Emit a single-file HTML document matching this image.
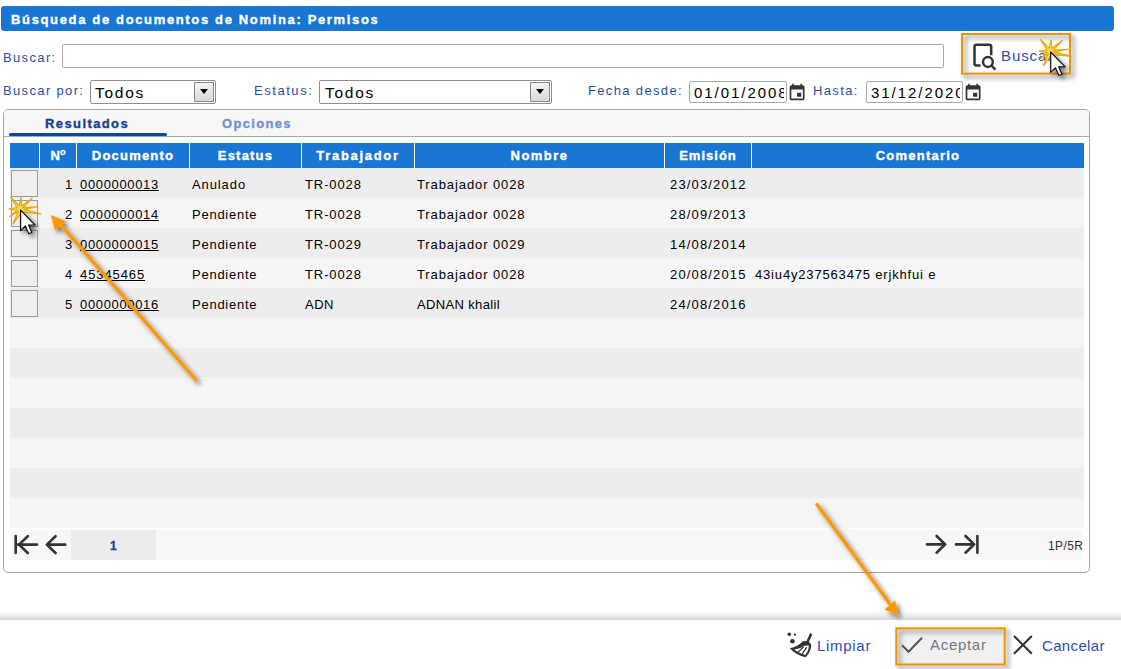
<!DOCTYPE html>
<html><head><meta charset="utf-8">
<style>
*{box-sizing:border-box;margin:0;padding:0}
html,body{width:1121px;height:669px;overflow:hidden;background:#fff;font-family:"Liberation Sans",sans-serif;position:relative}
.a{position:absolute;white-space:pre;line-height:1}
.hdr{left:1px;top:6px;width:1113px;height:25px;background:#1976d2;border-radius:3px}
.lbl{color:#1f4ea6;font-size:13px;letter-spacing:1.35px}
.inp{position:absolute;background:#fff;border:1px solid #a9a9a9;border-radius:2px}
.sel{position:absolute;background:#fff;border:1px solid #8f8f8f;border-radius:2px}
.selbtn{position:absolute;top:1px;right:1px;bottom:1px;width:20px;border:1px solid #8a8a8a;background:linear-gradient(#f4f4f4,#d8d8d8)}
.selbtn:after{content:"";position:absolute;left:4.5px;top:6px;border-left:4.5px solid transparent;border-right:4.5px solid transparent;border-top:5.5px solid #000}
.txt15{font-size:15px;color:#000;letter-spacing:2px}
.todos{font-size:15.5px;color:#000;letter-spacing:1.75px}
.panel{left:3px;top:109px;width:1087px;height:464px;border:1px solid #a6a6a6;border-radius:5px;background:#fff}
.tabbar{left:4px;top:110px;width:1085px;height:27px;background:#f7f7f7;border-bottom:1px solid #ababab;border-radius:4px 4px 0 0}
.th{-webkit-text-stroke:0.35px #fff;position:absolute;top:143px;height:25px;background:#1976d2;color:#fff;font-weight:bold;font-size:13px;letter-spacing:1.2px;text-align:center;line-height:25px;white-space:pre}
.row{position:absolute;left:10px;width:1074px;height:30px}
.td{position:absolute;font-size:13px;letter-spacing:0.9px;color:#000;line-height:1;white-space:pre}
.cb{position:absolute;left:11px;width:27px;height:27px;border:1px solid #9a9a9a;background:#efefef}
u{text-decoration:underline}
.fbtn{font-size:15px;color:#1f4fb0;letter-spacing:0.7px}
</style></head><body>

<div class="a hdr"></div>
<div class="a" style="left:11px;top:13px;font-size:13px;font-weight:bold;color:#fff;-webkit-text-stroke:0.35px #fff;letter-spacing:1.65px">Búsqueda de documentos de Nomina: Permisos</div>

<div class="a lbl" style="left:3px;top:51px">Buscar:</div>
<div class="inp" style="left:62px;top:44px;width:882px;height:24px"></div>

<!-- Buscar button -->
<div class="a fbtn" style="left:1001px;top:48px;letter-spacing:0.9px">Buscar</div>

<div class="a lbl" style="left:3px;top:84px">Buscar por:</div>
<div class="sel" style="left:90px;top:80px;width:126px;height:24px"><div class="selbtn"></div></div>
<div class="a todos" style="left:95px;top:85px">Todos</div>

<div class="a lbl" style="left:254px;top:84px;letter-spacing:1.55px">Estatus:</div>
<div class="sel" style="left:319px;top:80px;width:233px;height:24px"><div class="selbtn"></div></div>
<div class="a todos" style="left:325px;top:85px">Todos</div>

<div class="a lbl" style="left:588px;top:84px">Fecha desde:</div>
<div class="inp" style="left:689px;top:81px;width:98px;height:22px"><div class="a" style="left:0;top:0;width:94px;height:20px;overflow:hidden"><div class="a txt15" style="left:4px;top:3px;letter-spacing:1.95px">01/01/2008</div></div></div>

<div class="a lbl" style="left:813px;top:84px">Hasta:</div>
<div class="inp" style="left:866px;top:81px;width:97px;height:22px"><div class="a" style="left:0;top:0;width:93px;height:20px;overflow:hidden"><div class="a txt15" style="left:4px;top:3px;letter-spacing:1.95px">31/12/2020</div></div></div>

<!-- panel -->
<div class="a panel"></div>
<div class="a tabbar"></div>
<div class="a" style="left:45px;top:117px;font-size:13px;font-weight:bold;color:#173f8f;-webkit-text-stroke:0.35px #173f8f;letter-spacing:1.4px">Resultados</div>
<div class="a" style="left:9px;top:133px;width:158px;height:3px;background:#0d47a1;border-radius:2px"></div>
<div class="a" style="left:222px;top:117px;font-size:13px;font-weight:bold;color:#7391cd;-webkit-text-stroke:0.35px #7391cd;letter-spacing:1.33px">Opciones</div>

<!-- table header -->
<div class="th" style="left:10px;width:29px"></div>
<div class="th" style="left:40px;width:36px;letter-spacing:0"></div><div class="a" style="left:50.5px;top:149px;font-size:13px;font-weight:bold;color:#fff;-webkit-text-stroke:0.35px #fff">N</div><div class="a" style="left:60px;top:148px;font-size:9px;font-weight:bold;color:#fff;-webkit-text-stroke:0.3px #fff">o</div>
<div class="th" style="left:77px;width:112px">Documento</div>
<div class="th" style="left:190px;width:111px">Estatus</div>
<div class="th" style="left:302px;width:112px;letter-spacing:1.7px">Trabajador</div>
<div class="th" style="left:415px;width:249px;letter-spacing:1.44px">Nombre</div>
<div class="th" style="left:665px;width:86px;letter-spacing:1px">Emisión</div>
<div class="th" style="left:752px;width:332px;letter-spacing:1.23px">Comentario</div>

<!-- rows -->
<div class="row" style="top:168px;background:#ededed"></div>
<div class="row" style="top:198px;background:#f5f5f5"></div>
<div class="row" style="top:228px;background:#ededed"></div>
<div class="row" style="top:258px;background:#f5f5f5"></div>
<div class="row" style="top:288px;background:#ededed"></div>
<div class="row" style="top:318px;background:#f5f5f5"></div>
<div class="row" style="top:348px;background:#ededed"></div>
<div class="row" style="top:378px;background:#f5f5f5"></div>
<div class="row" style="top:408px;background:#ededed"></div>
<div class="row" style="top:438px;background:#f5f5f5"></div>
<div class="row" style="top:468px;background:#ededed"></div>
<div class="row" style="top:498px;background:#f5f5f5"></div>

<div class="cb" style="top:170px"></div>
<div class="cb" style="top:200px"></div>
<div class="cb" style="top:230px"></div>
<div class="cb" style="top:260px"></div>
<div class="cb" style="top:290px"></div>

<div class="td" style="left:65px;top:178px">1</div>
<div class="td" style="left:80px;top:178px"><u style="letter-spacing:0.65px">0000000013</u></div>
<div class="td" style="left:192px;top:178px">Anulado</div>
<div class="td" style="left:305px;top:178px">TR-0028</div>
<div class="td" style="left:417px;top:178px">Trabajador 0028</div>
<div class="td" style="left:670px;top:178px;letter-spacing:1.15px">23/03/2012</div>

<div class="td" style="left:65px;top:208px">2</div>
<div class="td" style="left:80px;top:208px"><u style="letter-spacing:0.65px">0000000014</u></div>
<div class="td" style="left:192px;top:208px;letter-spacing:0.75px">Pendiente</div>
<div class="td" style="left:305px;top:208px">TR-0028</div>
<div class="td" style="left:417px;top:208px">Trabajador 0028</div>
<div class="td" style="left:670px;top:208px;letter-spacing:1.15px">28/09/2013</div>

<div class="td" style="left:65px;top:238px">3</div>
<div class="td" style="left:80px;top:238px"><u style="letter-spacing:0.65px">0000000015</u></div>
<div class="td" style="left:192px;top:238px;letter-spacing:0.75px">Pendiente</div>
<div class="td" style="left:305px;top:238px">TR-0029</div>
<div class="td" style="left:417px;top:238px">Trabajador 0029</div>
<div class="td" style="left:670px;top:238px;letter-spacing:1.15px">14/08/2014</div>

<div class="td" style="left:65px;top:268px">4</div>
<div class="td" style="left:80px;top:268px"><u>45345465</u></div>
<div class="td" style="left:192px;top:268px;letter-spacing:0.75px">Pendiente</div>
<div class="td" style="left:305px;top:268px">TR-0028</div>
<div class="td" style="left:417px;top:268px">Trabajador 0028</div>
<div class="td" style="left:670px;top:268px;letter-spacing:1.15px">20/08/2015</div>
<div class="td" style="left:755px;top:268px;letter-spacing:0.83px">43iu4y237563475 erjkhfui e</div>

<div class="td" style="left:65px;top:298px">5</div>
<div class="td" style="left:80px;top:298px"><u style="letter-spacing:0.65px">0000000016</u></div>
<div class="td" style="left:192px;top:298px;letter-spacing:0.75px">Pendiente</div>
<div class="td" style="left:305px;top:298px;letter-spacing:0.5px">ADN</div>
<div class="td" style="left:417px;top:298px;letter-spacing:0.35px">ADNAN khalil</div>
<div class="td" style="left:670px;top:298px;letter-spacing:1.15px">24/08/2016</div>

<!-- pagination -->
<div class="a" style="left:11px;top:530px;width:1071px;height:30px;background:#f7f7f7"></div>
<div class="a" style="left:71px;top:530px;width:85px;height:30px;background:#ececec"></div>
<div class="a" style="left:110px;top:540px;font-size:12px;font-weight:bold;color:#1b3f9a;-webkit-text-stroke:0.3px #1b3f9a">1</div>
<div class="a" style="left:1048px;top:540px;font-size:12px;color:#333;letter-spacing:0.4px">1P/5R</div>

<!-- footer -->
<div class="a" style="left:0;top:610px;width:1121px;height:10px;background:linear-gradient(rgba(0,0,0,0),rgba(0,0,0,.05) 45%,rgba(0,0,0,.17))"></div>
<div class="a fbtn" style="left:817px;top:638px">Limpiar</div>
<div class="a" style="left:897px;top:629px;width:107px;height:35px;background:#f1f1f1"></div>
<div class="a" style="left:930px;top:637px;font-size:15px;color:#777;letter-spacing:0.7px">Aceptar</div>
<div class="a fbtn" style="left:1042px;top:638px;letter-spacing:0.35px">Cancelar</div>

<svg class="a" style="left:0;top:0" width="1121" height="669" viewBox="0 0 1121 669">
<defs>
<filter id="sh" x="-30%" y="-30%" width="160%" height="160%"><feGaussianBlur in="SourceAlpha" stdDeviation="2.4"/><feOffset dx="2.5" dy="3"/><feComponentTransfer><feFuncA type="linear" slope="0.55"/></feComponentTransfer><feMerge><feMergeNode/><feMergeNode in="SourceGraphic"/></feMerge></filter>
<g id="star"><path d="M-10.0 -12.3L-1.0 -3.2L0.8 -11.7L1.5 -3.1L12.3 -11.1L3.1 -1.4L18.4 -2.2L3.4 0.2L21.2 5.0L1.5 3.1L-7.2 15.1L-2.2 2.6L-10.6 7.8L-3.2 1.1L-11.7 0.0L-3.1 -1.5Z" fill="#f4dc55" stroke="#eaa500" stroke-width="1.1" stroke-linejoin="miter"/></g>
<g id="cur"><path d="M0 0V20.4L4.8 15.8L8.2 23.5L11.2 22.2L7.9 14.8H14.4Z" fill="#fff" stroke="#111" stroke-width="1.2" stroke-linejoin="round"/></g>
</defs>
<!-- orange boxes -->
<rect x="962" y="34" width="108" height="39.6" fill="none" stroke="#f39200" stroke-width="2" filter="url(#sh)"/>
<rect x="896.3" y="628.3" width="108.4" height="36.2" fill="none" stroke="#f39200" stroke-width="2" filter="url(#sh)"/>
<!-- calendar icons -->
<g fill="#333">
<path transform="translate(963.2,82.8) scale(0.825)" d="M17 12h-5v5h5v-5zM16 1v2H8V1H6v2H5c-1.11 0-1.99.9-1.99 2L3 19c0 1.1.89 2 2 2h14c1.1 0 2-.9 2-2V5c0-1.1-.9-2-2-2h-1V1h-2zm3 18H5V8h14v11z"/>
<path transform="translate(787.2,82.8) scale(0.825)" d="M17 12h-5v5h5v-5zM16 1v2H8V1H6v2H5c-1.11 0-1.99.9-1.99 2L3 19c0 1.1.89 2 2 2h14c1.1 0 2-.9 2-2V5c0-1.1-.9-2-2-2h-1V1h-2zm3 18H5V8h14v11z"/>
</g>
<!-- search icon -->
<g fill="none" stroke="#333" stroke-width="2.5" stroke-linejoin="round">
<path d="M980.6 65.6H976.5a2 2 0 0 1-2-2V46.8a2 2 0 0 1 2-2H989.2a2 2 0 0 1 2 2V55.2"/>
<circle cx="987.9" cy="62" r="4.9"/>
<path d="M991.4 65.5L995.4 69.6"/>
</g>
<!-- pagination arrows -->
<g fill="none" stroke="#333" stroke-width="2.6" stroke-linecap="round" stroke-linejoin="round">
<path d="M15.7 536V553M37 544.6H18M27.8 536.2L19 544.6L27.8 553"/>
<path d="M65.3 544.6H47M55.6 536.2L46.8 544.6L55.6 553"/>
<path d="M927 544.4H945M936.6 536L945.2 544.4L936.6 552.7"/>
<path d="M956 544.4H974M965.5 536L974.2 544.4L965.5 552.7M977.4 536V552.7"/>
</g>
<!-- check / X -->
<path d="M902 645.2L908.6 651.8L922 637.8" fill="none" stroke="#555" stroke-width="2"/>
<path d="M1014 636L1031.8 653.8M1031.8 636L1014 653.8" fill="none" stroke="#333" stroke-width="2.2"/>
<!-- broom -->
<g fill="#333">
<circle cx="789.3" cy="634.2" r="1.8"/><circle cx="795" cy="634.7" r="1.1"/><circle cx="792.4" cy="641.2" r="2.3"/>
<path d="M810.2 633L812.4 634.3L808.6 642.6L806.2 641.4Z"/>
<path d="M802.8 641.3C799.5 645 795 647.5 789.8 648.2C794 652.8 799.5 655.8 805.8 657.2C809.2 653.5 811.5 649 811.2 644.3L807.8 641Z"/>
</g>
<path d="M794.2 649.6C798 649 801.5 647.8 804.5 645.8L808.8 645.6C809 649 807.6 652.3 805.3 654.9C801.2 654 797.5 652.2 794.2 649.6Z" fill="#fff"/>
<path d="M797.6 652.6L803.6 646.8M801.8 654.6L806.8 647.2" stroke="#333" stroke-width="1.3" fill="none"/>
<!-- orange arrows -->
<g filter="url(#sh)">
<path d="M196 380L61 225" stroke="#ff9800" stroke-width="3.4" stroke-linecap="round"/>
<path d="M50.8 215L65.8 221.3L55 230.6Z" fill="#ff9800"/>
<path d="M817 504.5L890 604" stroke="#ff9800" stroke-width="3.4" stroke-linecap="round"/>
<path d="M898.4 615.6L884.4 609.4L895.3 600.6Z" fill="#ff9800"/>
</g>
<!-- stars + cursors -->
<use href="#star" transform="translate(20.2,209)"/>
<use href="#cur" transform="translate(20.6,210.2)" filter="url(#sh)"/>
<use href="#star" transform="translate(1050.3,51.4)"/>
<use href="#cur" transform="translate(1050.7,52)" filter="url(#sh)"/>
</svg>
</body></html>
